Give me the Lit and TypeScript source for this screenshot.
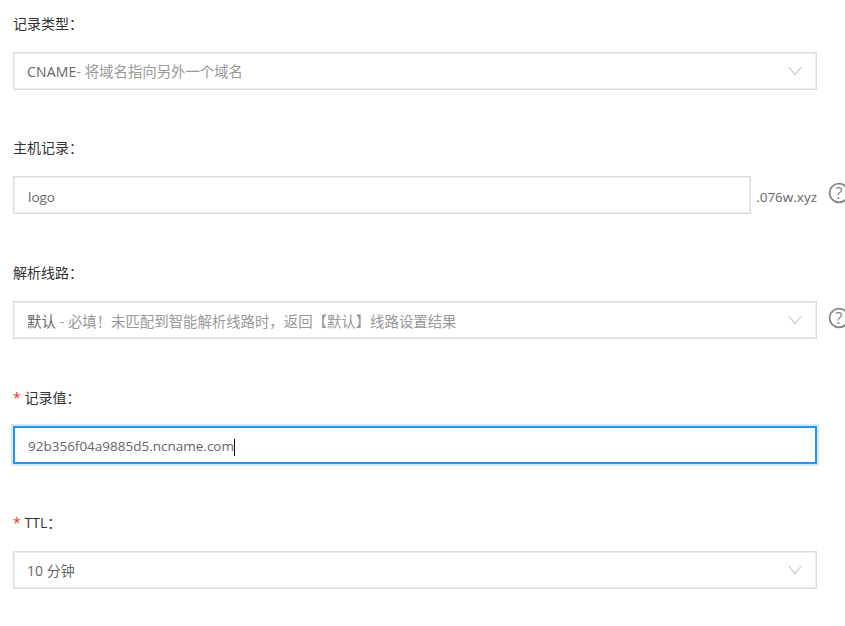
import { LitElement, html, css, nothing } from "lit";
import { customElement } from "lit/decorators.js";

const chevron = html`<svg class="chev" width="14" height="10" viewBox="0 0 14 10"><path d="M0.8 1 L7 8.6 L13.2 1" fill="none" stroke="#c4c4c4" stroke-width="1.1"/></svg>`;
const help = html`<svg class="help" width="22" height="22" viewBox="0 0 22 22"><circle cx="11" cy="11" r="9.4" fill="none" stroke="#858585" stroke-width="1.8"/><text x="11" y="16.6" text-anchor="middle" font-size="16" fill="#858585" font-family="'Open Sans',sans-serif">?</text></svg>`;

@customElement("app-root")
export class AppRoot extends LitElement {
  static styles = css`
    :host {
      display: block;
      width: 845px;
      height: 626px;
      overflow: hidden;
      background: #fff;
      font-family: "Open Sans", "Noto Sans CJK SC", sans-serif;
      font-size: 14px;
      color: #333;
    }
    .form {
      display: flex;
      flex-direction: column;
      gap: 48.75px;
      padding: 13.6px 0 0 13px;
    }
    .field {
      display: flex;
      flex-direction: column;
      gap: 18px;
    }
    .label {
      height: 20px;
      line-height: 20px;
      color: #333;
      display: flex;
      align-items: center;
    }
    .star {
      color: #e8392f;
      width: 11.5px;
      font-size: 14px;
    }
    .lat { font-size: 13.5px; }
    .name { font-size: 14px; letter-spacing: 0.15px; }
    .wide { font-size: 14.4px; }
    .row {
      display: flex;
      align-items: center;
      width: 804px;
      position: relative;
    }
    .box {
      box-sizing: border-box;
      flex: 1;
      height: 38px;
      border: 1px solid #dcdcdc;
      outline: 1px solid #ececec;
      outline-offset: -2px;
      display: flex;
      align-items: center;
      justify-content: space-between;
      padding: 0 14px 0 13px;
      color: #666;
      background: #fff;
    }
    .input { padding: 3px 14px 0; }
    .muted { color: #999; }
    .focus {
      border: 2px solid #2196f0;
      outline: none;
      padding-left: 13px;
      box-shadow: 0 0 0 2px #d3e9fb;
    }
    .caret {
      display: inline-block;
      width: 1px;
      height: 17px;
      background: #111;
      vertical-align: middle;
    }
    .suffix {
      width: 66px;
      padding-top: 3px;
      text-align: right;
      color: #666;
      flex: none;
    }
    .help {
      position: absolute;
      left: 815px;
      top: 50%;
      margin-top: -13px;
    }
  `;

  private field(label: string, required: boolean, body: unknown) {
    return html`<div class="field">
      <div class="label">${required ? html`<span class="star">*</span>` : nothing}${label}</div>
      ${body}
    </div>`;
  }

  render() {
    return html`<div class="form">
      ${this.field("记录类型：", false, html`<div class="row"><div class="box"><span><span class="name">CNAME</span><span class="muted wide">- 将域名指向另外一个域名</span></span>${chevron}</div></div>`)}
      ${this.field("主机记录：", false, html`<div class="row"><div class="box input"><span class="lat">logo</span></div><span class="suffix lat">.076w.xyz</span>${help}</div>`)}
      ${this.field("解析线路：", false, html`<div class="row"><div class="box"><span class="wide">默认<span class="muted"> - 必填！未匹配到智能解析线路时，返回【默认】线路设置结果</span></span>${chevron}</div>${help}</div>`)}
      ${this.field("记录值：", true, html`<div class="row"><div class="box input focus"><span class="lat">92b356f04a9885d5.ncname.com<span class="caret"></span></span></div></div>`)}
      ${this.field("TTL：", true, html`<div class="row"><div class="box"><span>10 分钟</span>${chevron}</div></div>`)}
    </div>`;
  }
}
